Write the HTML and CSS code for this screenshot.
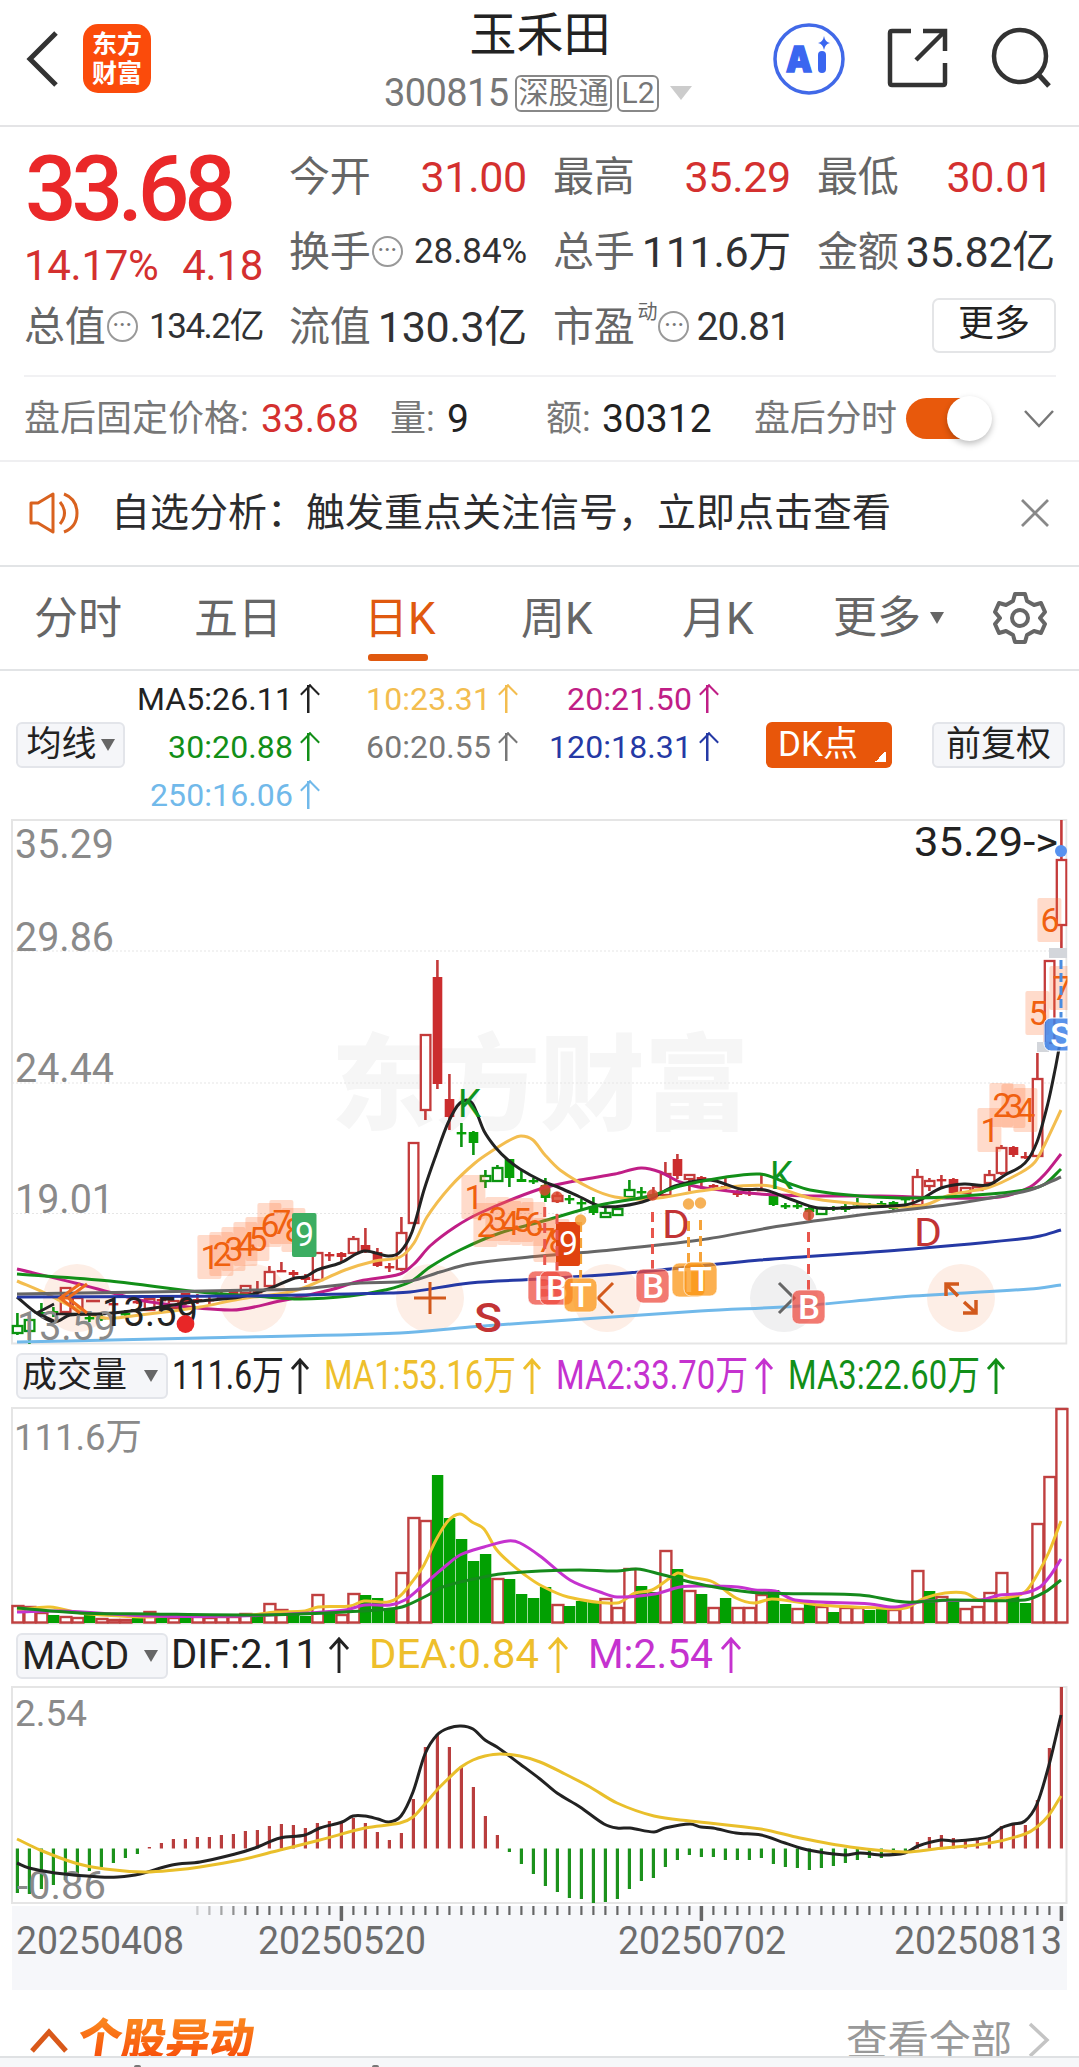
FILE: index.html
```html
<!DOCTYPE html>
<html lang="zh-CN">
<head>
<meta charset="utf-8">
<title>玉禾田 300815</title>
<link rel="stylesheet" href="styles.css">
</head>
<body>
<header class="topbar">
  <div class="topbar-left">
    <svg class="back" width="34" height="60" viewBox="0 0 34 60"><path d="M31 4 5 30 31 56" fill="none" stroke="#333" stroke-width="5"/></svg>
    <div class="logo"><span>东方</span><span>财富</span></div>
  </div>
  <div class="title">
    <h1>玉禾田</h1>
    <div class="code"><span class="num">300815</span><span class="tag">深股通</span><span class="tag tag-l2">L2</span><i class="tri tri-light"></i></div>
  </div>
  <div class="topbar-right">
    <svg width="74" height="74" viewBox="0 0 74 74"><circle cx="37" cy="37" r="34" fill="none" stroke="#4169e8" stroke-width="3.5"/><text x="14" y="50" class="ai" textLength="26" lengthAdjust="spacingAndGlyphs">A</text><path d="M50 33v14" stroke="#3a66f0" stroke-width="8" stroke-linecap="round"/><path d="M52 14q1 6 6 7q-5 1-6 7q-1-6-6-7q5-1 6-7z" fill="#3a66f0"/></svg>
    <svg width="62" height="62" viewBox="0 0 62 62"><path d="M24 4H5q-2 0-2 2V56q0 2 2 2H56q2 0 2-2V36M36 4H58V24M57 5 29 33" fill="none" stroke="#333" stroke-width="4.5"/></svg>
    <svg width="62" height="62" viewBox="0 0 62 62"><circle cx="30" cy="29" r="26" fill="none" stroke="#333" stroke-width="4.5"/><path d="M48 47 59 59" stroke="#333" stroke-width="5"/></svg>
  </div>
</header>

<section class="quote">
  <div class="last">
    <div class="price">33.68</div>
    <div class="change"><span>14.17%</span><span>4.18</span></div>
  </div>
  <div class="cell"><label>今开</label><b class="up">31.00</b></div>
  <div class="cell"><label>最高</label><b class="up">35.29</b></div>
  <div class="cell"><label>最低</label><b class="up end">30.01</b></div>
  <div class="cell"><label>换手</label><i class="dots">···</i><b class="small">28.84%</b></div>
  <div class="cell"><label>总手</label><b>111.6万</b></div>
  <div class="cell"><label>金额</label><b>35.82亿</b></div>
  <div class="cell"><label>总值</label><i class="dots">···</i><b class="small cap">134.2亿</b></div>
  <div class="cell"><label>流值</label><b>130.3亿</b></div>
  <div class="cell"><label>市盈<sup>动</sup></label><i class="dots dots-pe">···</i><b class="pe">20.81</b></div>
  <div class="cell cell-more"><button class="more">更多</button></div>
</section>

<section class="after">
  <span class="a1">盘后固定价格:</span><b class="up a2">33.68</b>
  <span class="a3">量:</span><b class="a4">9</b>
  <span class="a5">额:</span><b class="a6">30312</b>
  <span class="a7">盘后分时</span><i class="toggle"></i>
  <svg width="32" height="22" viewBox="0 0 32 22"><path d="M2 3 16 18 30 3" fill="none" stroke="#777" stroke-width="2.5"/></svg>
</section>

<section class="notice">
  <svg width="52" height="44" viewBox="0 0 52 44"><g fill="none" stroke="#d9621f" stroke-width="3"><path d="M2 12H9L24 3V41L9 32H2Z" stroke-linejoin="round"/><path d="M31 11Q40 22 31 33M35 3Q48 8 48 22T35 41"/></g></svg>
  <p>自选分析：触发重点关注信号，立即点击查看</p>
  <svg width="30" height="30" viewBox="0 0 30 30"><path d="M2 2 28 28M28 2 2 28" stroke="#888" stroke-width="2.8"/></svg>
</section>

<nav class="tabs">
  <span>分时</span><span>五日</span><span class="active">日K</span><span>周K</span><span>月K</span>
  <span class="tab-more">更多<i class="tri"></i></span>
  <svg width="54" height="54" viewBox="0 0 54 54"><g fill="none" stroke="#666" stroke-width="4" stroke-linejoin="round"><path d="M22 3H32L34 10L41 14L48 12L52 21L47 27L52 33L48 42L41 40L34 44L32 51H22L20 44L13 40L6 42L2 33L7 27L2 21L6 12L13 14L20 10Z"/><circle cx="27" cy="27" r="8"/></g></svg>
</nav>

<section class="ma">
  <button class="chip">均线<i class="tri"></i></button>
  <div class="ma-grid">
    <span class="c-black">MA5:26.11<i class="arrow"></i></span><span class="c-gold">10:23.31<i class="arrow"></i></span><span class="c-mag">20:21.50<i class="arrow"></i></span>
    <span class="c-green">30:20.88<i class="arrow"></i></span><span class="c-gray">60:20.55<i class="arrow"></i></span><span class="c-blue">120:18.31<i class="arrow"></i></span>
    <span class="c-sky">250:16.06<i class="arrow"></i></span>
  </div>
  <button class="chip chip-dk">DK点</button>
  <button class="chip chip-right">前复权</button>
</section>

<svg id="kline" class="chart" width="1079" height="526" viewBox="0 819 1079 526"></svg>

<section class="legend">
  <button class="chip">成交量<i class="tri"></i></button>
  <svg width="900" height="50" viewBox="172 1351 900 50" class="legend-values">
    <g class="c-black"><text x="172" y="1389" textLength="112" lengthAdjust="spacingAndGlyphs">111.6万</text><path d="M300 1394V1361M292 1369 300 1360 308 1369"/></g>
    <g class="c-yel"><text x="324" y="1389" textLength="192" lengthAdjust="spacingAndGlyphs">MA1:53.16万</text><path d="M532 1394V1361M524 1369 532 1360 540 1369"/></g>
    <g class="c-pur"><text x="556" y="1389" textLength="192" lengthAdjust="spacingAndGlyphs">MA2:33.70万</text><path d="M764 1394V1361M756 1369 764 1360 772 1369"/></g>
    <g class="c-green"><text x="788" y="1389" textLength="192" lengthAdjust="spacingAndGlyphs">MA3:22.60万</text><path d="M996 1394V1361M988 1369 996 1360 1004 1369"/></g>
  </svg>
</section>

<svg id="volume" class="chart" width="1079" height="218" viewBox="0 1407 1079 218"></svg>

<section class="legend legend-macd">
  <button class="chip">MACD<i class="tri"></i></button>
  <svg width="900" height="50" viewBox="172 1631 900 50" class="legend-values">
    <g class="c-black"><text x="171" y="1668" textLength="147" lengthAdjust="spacingAndGlyphs">DIF:2.11</text><path d="M339 1673V1640M330 1649 339 1639 348 1649"/></g>
    <g class="c-yel"><text x="369" y="1668" textLength="170" lengthAdjust="spacingAndGlyphs">DEA:0.84</text><path d="M558 1673V1640M549 1649 558 1639 567 1649"/></g>
    <g class="c-pur"><text x="588" y="1668" textLength="125" lengthAdjust="spacingAndGlyphs">M:2.54</text><path d="M731 1673V1640M722 1649 731 1639 740 1649"/></g>
  </svg>
</section>

<svg id="macd" class="chart" width="1079" height="218" viewBox="0 1686 1079 218"></svg>
<svg id="axis" class="chart axis" width="1079" height="86" viewBox="0 1904 1079 86"></svg>

<section class="moves">
  <svg width="40" height="26" viewBox="0 0 40 26"><path d="M3 23 20 4 37 23" fill="none" stroke="#d9591a" stroke-width="5"/></svg>
  <h2>个股异动</h2>
  <span>查看全部</span>
  <svg width="24" height="38" viewBox="0 0 24 38"><path d="M3 3 20 19 3 35" fill="none" stroke="#c4c4c4" stroke-width="3.5"/></svg>
</section>
<footer class="bottombar"><i></i><i></i></footer>
<script src="chart.js"></script>
</body>
</html>
```
FILE: styles.css
```css
* { box-sizing: border-box; }
html, body { margin: 0; }
body {
  width: 1079px; height: 2067px; overflow: hidden; background: #fff; color: #303133;
  font-family: Roboto, "Noto Sans CJK SC", sans-serif;
}
i { font-style: normal; }
b { font-weight: 400; }
button { font-family: inherit; color: #222; margin: 0; padding: 0; }
svg { display: block; flex: none; }
.tri { display: inline-block; border: 7px solid transparent; border-top: 12px solid #666; border-bottom: 0; }
.up { color: #d4302f; }

.topbar { height: 127px; border-bottom: 2px solid #e4e4e6; display: grid; grid-template-columns: 384px 312px 1fr; }
.topbar-left { display: flex; align-items: flex-start; padding: 24px 0 0 25px; }
.back { margin: 5px 24px 0 0; }
.logo { width: 68px; height: 69px; border-radius: 15px; background: #fb4b0b; color: #fff; display: flex; flex-direction: column; align-items: center; justify-content: center; font-weight: 700; font-size: 25px; line-height: 29px; }
.title { text-align: center; }
h1 { margin: 8px 0 0; font-weight: 400; font-size: 47px; line-height: 54px; color: #222; }
.code { display: flex; align-items: center; height: 38px; margin-top: 12px; color: #777; font-size: 38px; }
.code .num { width: 131px; text-align: left; letter-spacing: -.6px; }
.tag { border: 2px solid #888; border-radius: 6px; height: 37px; line-height: 32px; width: 97px; font-size: 30px; text-align: center; color: #777; }
.tag-l2 { width: 42px; margin-left: 5px; }
.tri-light { border-width: 14px 11px 0; border-top-color: #ccc; margin-left: 11px; }
.topbar-right { display: flex; padding: 22px 0 0 76px; }
.topbar-right svg + svg { margin: 5px 0 0 41px; }
.topbar-right svg + svg + svg { margin-left: 41px; }
.ai { font-family: Inter, sans-serif; font-weight: 900; font-size: 36px; fill: #3a66f0; stroke: #3a66f0; stroke-width: 1.5; }

.quote { height: 250px; margin: 0 23px 0 24px; padding-top: 12px; border-bottom: 2px solid #f1f1f3; display: grid; grid-template-columns: 239px 238px 238px 238px; grid-template-rows: 75px 75px 75px; column-gap: 26px; color: #303133; }
.last { grid-row: span 2; color: #ea2829; }
.price { font-size: 91px; font-weight: 500; line-height: 101px; letter-spacing: -5.3px; padding-left: 1px; }
.change { display: flex; justify-content: space-between; font-size: 42px; line-height: 52px; letter-spacing: -.3px; color: #d4302f; }
.cell { display: flex; align-items: center; justify-content: flex-end; white-space: nowrap; }
.cell label { font-size: 41px; color: #666; margin-right: auto; line-height: 60px; letter-spacing: -.2px; }
.cell b { font-size: 43px; line-height: 60px; letter-spacing: -.3px; }
.cell .small { font-size: 35px; letter-spacing: -.1px; flex: 1; text-align: right; }
.cell .cap { letter-spacing: -1.5px; }
.cell .end { margin-right: 2px; }
.dots { width: 31px; height: 31px; border: 2.5px solid #999; border-radius: 50%; margin-left: 1px; font-size: 27px; line-height: 24px; text-align: center; color: #777; flex: none; letter-spacing: -.5px; }
.cell label:has(+ .dots) { margin-right: 0; }
.cell .pe { font-size: 39px; flex: 1; text-align: right; margin-right: 1px; letter-spacing: -.9px; }
sup { font-size: 20px; line-height: 0; vertical-align: 22px; margin-left: 3px; }
.dots-pe { margin-left: 1px; }
.more { width: 124px; height: 55px; border: 2px solid #e4e5e7; border-radius: 7px; background: #fff; font-size: 36px; line-height: 46px; padding-bottom: 4px; }
.cell-more { margin-right: -1px; align-items: flex-start; padding-top: 9px; }

.after { height: 85px; border-bottom: 2px solid #efeff1; display: flex; align-items: center; padding-left: 24px; font-size: 36px; line-height: 50px; color: #777; white-space: nowrap; }
.after b { font-size: 39px; color: #222; }
.after b.up { color: #d4302f; }
.a1 { width: 237px; } .a2 { width: 129px; } .a3 { width: 57px; } .a4 { width: 99px; } .a5 { width: 56px; } .a6 { width: 152px; } .a7 { width: 152px; letter-spacing: -.3px; }
.toggle { width: 82px; height: 41px; border-radius: 21px; background: #e8590c; position: relative; margin-right: 35px; }
.toggle::after { content: ""; position: absolute; right: -4px; top: -2px; width: 45px; height: 45px; border-radius: 50%; background: #fff; box-shadow: 0 3px 6px rgba(0,0,0,.25); }

.notice { height: 105px; border-bottom: 2px solid #e2e4e6; display: flex; align-items: center; padding: 0 29px 2px 29px; }
.notice p { margin: 0 auto 0 30px; font-size: 39px; line-height: 60px; color: #2c2c2e; }

.tabs { height: 104px; border-bottom: 2px solid #e2e4e6; display: flex; align-items: center; padding-left: 34px; font-size: 44px; color: #666; white-space: nowrap; }
.tabs > span { height: 100px; line-height: 103px; }
.tabs > span:nth-child(1) { width: 160px; }
.tabs > span:nth-child(2) { width: 170px; }
.tabs > .active { width: 71px; margin-right: 86px; color: #e0590f; position: relative; }
.active::after { content: ""; position: absolute; left: 4px; bottom: 7px; width: 60px; height: 7px; border-radius: 3px; background: #e0590f; }
.tabs > span:nth-child(4) { width: 161px; }
.tabs > span:nth-child(5) { width: 151px; }
.tab-more { width: 160px; display: flex; align-items: center; }
.tab-more .tri { margin-left: 9px; }

.ma { height: 148px; display: flex; align-items: center; padding: 0 14px 0 16px; }
.chip { height: 46px; border: 2px solid #e3e5ea; border-radius: 6px; background: #f5f6f9; font-size: 35px; line-height: 38px; display: flex; align-items: center; justify-content: center; white-space: nowrap; flex: none; }
.ma .chip { width: 109px; }
.ma .chip .tri { margin-left: 4px; }
.ma-grid { display: grid; grid-template-columns: 193px 198px 201px; grid-template-rows: repeat(3, 48px); width: 641px; font-size: 32px; line-height: 48px; margin-top: 3px; letter-spacing: .1px; }
.ma-grid span { display: flex; align-items: center; justify-content: flex-end; }
.arrow { width: 17px; height: 28px; margin-left: 7px; margin-right: 1px; background: linear-gradient(currentColor, currentColor) 50% 0 / 2.5px 100% no-repeat; position: relative; }
.arrow::after { content: ""; position: absolute; left: 2.5px; top: 2px; width: 12px; height: 12px; border: solid currentColor; border-width: 2.5px 0 0 2.5px; transform: rotate(45deg); }
.ma .chip-dk { width: 126px; background: linear-gradient(135deg, transparent 50%, #fff 50%) 108px 30px / 12px 10px no-repeat #e8560a; border: 0; color: #fff; justify-content: flex-start; padding-left: 12px; font-size: 35px; line-height: 42px; }
.ma .chip-right { width: 133px; margin-left: auto; }

.c-black { color: #222; } .c-gold { color: #f3bd4f; } .c-mag { color: #c01e86; } .c-green { color: #128f18; } .c-gray { color: #777; } .c-blue { color: #2539a5; } .c-sky { color: #71b9ea; } .c-yel { color: #eebf2c; } .c-pur { color: #c532cf; }

.legend { height: 62px; display: flex; align-items: flex-start; padding: 8px 0 0 16px; }
.legend-macd { padding-top: 8px; height: 61px; }
.legend .chip { width: 152px; margin-right: 4px; justify-content: space-between; padding: 0 8px 0 4px; }
.legend-macd .chip { font-size: 38px; letter-spacing: -.2px; }
.legend-values { font-size: 40px; margin-top: -2px; }
.legend-values text { fill: currentColor; }
.legend-values path { stroke: currentColor; stroke-width: 2.9; fill: none; }

.chart { overflow: hidden; }
.chart text { font-family: Roboto, "Noto Sans CJK SC", sans-serif; }
.moves { height: 66px; overflow: hidden; display: flex; align-items: flex-start; padding: 0 28px 0 29px; }
.moves > svg:first-child { margin-top: 38px; }
.moves > svg:last-child { margin: 31px 0 0 15px; }
h2 { margin: 22px 0 0 9px; font-size: 44px; line-height: 56px; font-weight: 900; width: 200px; transform: skewX(-8deg); background: linear-gradient(#fa831d 20%, #f8540c 75%); -webkit-background-clip: text; color: transparent; }
.moves span { margin: 24px 0 0 auto; font-size: 41.5px; line-height: 56px; color: #999; }
.bottombar { height: 11px; border-top: 2px solid #dfe1e3; background: #f6f7f9; display: flex; align-items: flex-end; padding-left: 134px; }
.bottombar i { width: 7px; height: 2px; border-radius: 2px 2px 0 0; background: #777; margin-right: 231px; }
```
FILE: chart.js
```js
const RED = '#c43a3a', FILL = '#cb2d2e', GREEN = '#0b9410';
const X = i => 17.4 + 12 * i;
const el = id => document.getElementById(id);
const rect = (x, y, w, h, a) => `<rect x="${x}" y="${y}" width="${w}" height="${h}" ${a}/>`;
const line = (x1, y1, x2, y2, c, w, a = '') => `<path d="M${x1} ${y1}L${x2} ${y2}" stroke="${c}" stroke-width="${w}" fill="none" ${a}/>`;
const text = (s, x, y, size, w, fill, a = '') => `<text x="${x}" y="${y}" font-size="${size}" ${w ? `textLength="${w}" lengthAdjust="spacingAndGlyphs"` : ''} fill="${fill}" ${a}>${s}</text>`;

// Smooth curve through "x,y" pairs
function curve(pts, c, w = 3) {
  const p = pts.split(' ').map(s => s.split(',').map(Number));
  let d = `M${p[0]}`;
  for (let i = 0; i < p.length - 1; i++) {
    const dx = (p[i + 1][0] - p[i][0]) / 3;
    const m = k => k <= 0 || k >= p.length - 1 ? null : (p[k + 1][1] - p[k - 1][1]) / (p[k + 1][0] - p[k - 1][0]);
    const s = (p[i + 1][1] - p[i][1]) / (p[i + 1][0] - p[i][0]);
    const a = m(i) ?? s, b = m(i + 1) ?? s;
    d += `C${p[i][0] + dx} ${p[i][1] + a * dx} ${p[i + 1][0] - dx} ${p[i + 1][1] - b * dx} ${p[i + 1]}`;
  }
  return `<path d="${d}" fill="none" stroke="${c}" stroke-width="${w}" stroke-linejoin="round"/>`;
}
const frame = (y, h) => rect(12, y, 1054.5, h, 'fill="none" stroke="#e5e5e5" stroke-width="2"');

// Candles: kind (r/g hollow, R/G filled), high, top, bottom, low
const candles = `g 1313 1325 1333 1335|g 1315 1319 1331 1344|G 1303 1312 1314 1315|G 1307 1311 1313 1317|r 1287 1287 1312 1312|r 1297 1297 1308 1308|G 1312 1317 1319 1322|G 1313 1317 1319 1321|R 1303 1303 1305 1305|G 1310 1313 1315 1318|R 1300 1301 1303 1304|r 1298 1298 1310 1310|R 1296 1299 1301 1306|r 1300 1300 1308 1308|R 1293 1293 1303 1305|R 1294 1299 1301 1304|R 1296 1299 1301 1304|R 1292 1296 1298 1300|R 1290 1291 1297 1297|r 1285 1285 1293 1293|R 1281 1291 1293 1296|r 1266 1271 1286 1286|R 1262 1270 1272 1272|R 1270 1272 1275 1277|R 1274 1277 1280 1283|r 1252 1252 1280 1280|R 1252 1254 1256 1261|R 1252 1253 1257 1263|r 1236 1238 1253 1253|R 1228 1245 1251 1253|R 1248 1252 1266 1267|R 1263 1266 1268 1272|r 1217 1232 1269 1271|r 1142 1142 1223 1223|r 1034 1034 1110 1120|R 960 977 1084 1089|R 1074 1099 1117 1130|G 1123 1132 1134 1147|G 1131 1132 1143 1155|g 1170 1175 1181 1188|g 1165 1167 1181 1181|G 1159 1159 1178 1187|G 1169 1179 1182 1182|G 1178 1180 1182 1184|G 1178 1185 1198 1202|r 1192 1195 1201 1203|G 1195 1198 1200 1204|G 1199 1202 1204 1209|G 1197 1206 1213 1215|g 1206 1212 1217 1217|g 1208 1208 1215 1215|g 1180 1189 1197 1197|G 1187 1191 1193 1197|R 1187 1194 1196 1200|r 1162 1173 1195 1197|R 1154 1159 1176 1179|r 1174 1174 1179 1191|R 1176 1177 1182 1189|R 1184 1185 1187 1189|R 1177 1186 1188 1191|R 1190 1191 1195 1197|R 1190 1192 1194 1196|R 1175 1189 1191 1191|G 1193 1195 1205 1206|G 1203 1205 1207 1209|G 1203 1205 1207 1209|G 1206 1208 1212 1220|g 1207 1207 1214 1215|G 1206 1207 1209 1211|G 1204 1206 1210 1212|G 1198 1203 1205 1208|G 1203 1204 1206 1209|G 1201 1203 1205 1208|G 1201 1202 1209 1210|G 1196 1198 1200 1204|r 1169 1176 1205 1205|r 1178 1180 1186 1191|R 1175 1179 1181 1187|R 1178 1179 1193 1193|r 1187 1187 1193 1193|r 1186 1186 1190 1190|r 1170 1174 1183 1183|r 1145 1147 1173 1175|R 1146 1147 1155 1157|R 1152 1156 1158 1159|r 1053 1078 1156 1156|r 960 960 1043 1043|r 820 859 925 948`.split('|');

function candle(s, i) {
  const [k, ...v] = s.split(' '), [h, t, b, l] = v.map(Number), x = X(i);
  const c = k.toLowerCase() === 'r' ? RED : GREEN;
  const body = k === 'r' || k === 'g'
    ? rect(x - 4.6, t + 1, 9.6, Math.max(b - t - 1, 3), `fill="#fff" fill-opacity=".9" stroke="${c}" stroke-width="2.3"`)
    : rect(x - 4.7, t, 9.6, Math.max(b - t, 2.4), `fill="${k === 'R' ? FILL : '#07a006'}"`);
  return line(x, h, x, t, c, 2.6) + line(x, b, x, l, c, 2.6) + body;
}

let k = text('东方财富', 331, 1122, 104, 418, '#f6f6f6', 'font-weight="900"') + frame(820, 523.5);
for (const y of [951, 1083, 1213.5]) k += line(12, y, 1066, y, '#e6e6e6', 1.2, 'stroke-dasharray="2 2"');
for (const x of [77, 253, 430, 607, 961]) k += `<circle cx="${x}" cy="1298" r="34" fill="#fdeee6"/>`;
k += '<circle cx="784" cy="1298" r="34" fill="#f0f0f1"/>';
k += candles.map(candle).join('');

// Moving averages
k += curve('17,1342 200,1338 400,1333 470,1327 540,1322 700,1311 800,1306 900,1297 1030,1289 1061,1285', '#71b9ea');
k += curve('17,1269 75,1283 120,1295 150,1302 232,1310 280,1301 330,1290 360,1281 400,1274 414,1264 430,1246 455,1227 480,1213 540,1189 580,1180 615,1174 641,1168 660,1172 680,1182 705,1188 760,1194 820,1196 880,1196 950,1198 1000,1197 1030,1187 1045,1174 1061,1154', '#c01e86');
k += curve('17,1281 45,1293 75,1308 105,1318 140,1315 200,1307 240,1299 290,1292 313,1284 345,1270 375,1261 400,1257 414,1243 427,1217 450,1187 475,1163 495,1149 510,1140 521,1136 533,1140 545,1155 560,1170 590,1188 615,1197 650,1199 700,1191 740,1186 770,1186 810,1198 850,1203 900,1207 925,1205 950,1195 990,1187 1020,1173 1035,1162 1045,1144 1061,1110', '#f3bd4f');
k += curve('17,1297 35,1312 54,1322 70,1315 100,1314 140,1310 200,1301 240,1297 265,1290 295,1278 305,1277 317,1270 340,1263 364,1251 388,1256 400,1252 412,1232 424,1190 436,1155 448,1123 460,1103 472,1103 484,1131 496,1148 508,1160 520,1169 540,1180 560,1188 580,1197 600,1206 622,1206 648,1200 675,1186 710,1180 740,1189 765,1190 790,1199 818,1208 860,1207 905,1205 920,1200 941,1188 964,1184 988,1185 1005,1175 1025,1163 1037,1142 1048,1103 1055,1070 1060,1043', '#222');
k += curve('17,1274 110,1281 200,1292 255,1296 300,1299 350,1296 385,1290 410,1282 430,1267 460,1250 500,1233 540,1222 600,1205 650,1196 680,1186 720,1178 760,1174 785,1182 810,1190 860,1196 920,1198 990,1194 1030,1189 1045,1184 1061,1169', '#128f18');
k += curve('17,1297 250,1296 390,1293 410,1292 470,1283 540,1279 640,1272 760,1260 900,1250 1020,1239 1040,1236 1061,1230', '#2539a5');
k += curve('17,1294 150,1292 260,1290 300,1289 360,1283 410,1281 440,1272 470,1264 540,1256 600,1251 700,1240 780,1226 860,1215 960,1203 1030,1190 1061,1177', '#666');

for (const [s, x, y] of [['35.29', 15, 858], ['29.86', 15, 950.5], ['24.44', 15, 1081.5], ['19.01', 15, 1213], ['13.59', 17, 1340]]) k += text(s, x, y, 40, 99, '#8a8a8a');
k += text('35.29-&gt;', 914, 856, 40.5, 144, '#222');
k += `<path d="M54 1304 37 1313 54 1321M56 1314H102" fill="none" stroke="#222" stroke-width="2.7"/>` + text('13.59', 102, 1326, 41, 96, '#222');
k += '<circle cx="185.5" cy="1324" r="8.9" fill="#e82627"/>' + line(86, 1301, 100, 1301, RED, 2.6);

// Sequence numbers: digit, candle index, top
const seq = '1 16 1235|2 17 1232|3 18 1227|4 19 1222|5 20 1217|6 21 1203|7 22 1200|8 23 1208|1 38 1175|2 39 1203|3 40 1197|4 41 1201|5 42 1198|6 43 1202|7 44 1218|8 45 1219|1 81 1108|2 82 1083|3 83 1084|4 84 1088|5 85 991|6 86 898|7 87 966'.split('|').map(s => s.split(' ').map(Number));
for (const [, i, y] of seq) k += rect(X(i) - 12, y, 24, 44, 'rx="2" fill="#ff7030" fill-opacity=".25"');
for (const [n, i, y] of seq) k += text(n, X(i) - 9, y + 34, 34, 19, '#f0600f');
k += rect(292, 1213, 24.5, 44, 'rx="2" fill="#3cad62"') + text('9', 295, 1246, 34, 19, '#fff');
k += line(580.6, 1222, 580.6, 1278, '#f5a33a', 3, 'stroke-dasharray="10 6"');
k += rect(556, 1222, 24, 44, 'rx="2" fill="#e0420f"') + text('9', 559, 1255, 34, 19, '#fff');

for (const [s, x, y, c] of [['K', 458, 1117, '#0f9420'], ['K', 770, 1189, '#0f9420'], ['D', 662, 1238, '#c23335'], ['D', 914, 1246, '#c23335'], ['S', 474, 1332, '#c23335']]) k += text(s, x, y, s === 'S' ? 40 : 39, s === 'K' ? 23 : 28, c, s === 'S' ? 'font-weight="500"' : '');

// Floating tool glyphs
const tool = (d, c = '#d2591c', w = 3) => `<path d="${d}" fill="none" stroke="${c}" stroke-width="${w}"/>`;
k += tool('M80 1284 60 1298 80 1313M87 1284 68 1298 87 1313M60 1298H70', '#ee6b1c') + tool('M414 1298H446M430 1282V1314') + tool('M613 1283 598 1298 613 1313') + tool('M779 1283 794 1298 779 1313', '#666');
k += tool('M946 1296V1284H959M946 1284 958 1296M964 1302 976 1313M976 1300V1313H963', '#d2591c', 3.5);

// Trade markers: letter, badge x, badge y, stem x, dot y
for (const [s, bx, by, x, y] of [['B', 528, 1271, 544.7, 1190], ['B', 540, 1271, 557, 1197], ['B', 636, 1269, 652.5, 1195], ['B', 792, 1290, 808.5, 1215], ['T', 564, 1278, 580.6, 1220], ['T', 672, 1263, 688.5, 1204], ['T', 684, 1262, 700.5, 1203]]) {
  const b = s === 'B', c = b ? '#e8564d' : '#f5a33a';
  if (bx !== 564) k += line(x, y + 17, x, by, c, 3, 'stroke-dasharray="10 6"');
  k += `<circle cx="${x}" cy="${y}" r="5.7" fill="${b ? '#d9482f' : c}" fill-opacity=".85"/>`;
  k += rect(bx, by, 33, 34, `rx="7" fill="${b ? '#ee4b40' : '#fb9512'}" fill-opacity=".74" stroke="#fff" stroke-opacity=".7"`);
  k += text(s, bx + 6, by + 28.5, 33, 22, '#fff', 'font-weight="500"');
}
k += rect(1049, 948, 18, 10, 'fill="#d3d6db"') + rect(1037, 1042, 12, 10, 'fill="#d3d6db"');
k += line(1061, 960, 1061, 1018, '#4b8de0', 3, 'stroke-dasharray="9 4"') + '<circle cx="1061" cy="851" r="6" fill="#5792ef"/>';
k += rect(1044, 1018, 34, 33, 'rx="7" fill="#3f82e8" fill-opacity=".86" stroke="#fff"') + text('S', 1050, 1047, 34, 22, '#fff', 'font-weight="500"');
k += rect(1067.5, 819, 12, 526, 'fill="#fff"');
el('kline').innerHTML = k;

// Volume: colour + top edge
const vol = 'r1605 r1606 r1612 g1615 r1616 r1617 g1614 r1618 r1619 r1619 g1616 r1611 g1615 r1617 g1617 r1616 r1617 r1616 r1616 r1613 g1615 r1603 r1609 g1613 g1616 r1594 g1612 r1614 r1593 g1595 g1598 g1608 r1572 r1517 r1520 g1475 g1518 g1539 g1561 g1554 r1578 g1579 g1594 g1598 g1587 r1604 g1606 g1601 g1601 r1598 r1607 r1568 g1586 g1592 r1550 g1569 r1590 g1594 r1607 g1598 r1607 r1607 r1594 g1590 g1604 r1608 g1602 r1606 g1612 r1607 r1607 g1610 g1609 r1609 r1606 r1570 g1591 r1596 g1602 r1608 r1606 r1592 r1572 g1596 g1603 r1523 r1476 r1408'.split(' ');
let v = frame(1408, 215.5) + text('111.6万', 14, 1450, 37, 128, '#8a8a8a');
vol.forEach((s, i) => {
  const y = +s.slice(1);
  v += s[0] === 'r' ? rect(X(i) - 5, y + 1, 11, 1621.5 - y, 'fill="#fff" stroke="#c04040" stroke-width="2.4"') : rect(X(i) - 5.5, y, 11.4, 1623 - y, 'fill="#02a002"');
});
v += curve('17,1610 50,1607 80,1613 120,1616 145,1617 170,1616 250,1615 275,1612 305,1611 318,1607 350,1606 364,1601 388,1602 400,1596 412,1582 424,1565 436,1540 448,1521 460,1514 472,1522 484,1529 496,1549 510,1563 525,1575 540,1585 568,1597 617,1603 635,1593 652,1590 670,1578 678,1573 690,1577 713,1582 736,1598 754,1603 772,1599 820,1605 880,1608 905,1608 925,1598 945,1593 965,1593 980,1600 1010,1597 1025,1592 1037,1575 1049,1552 1061,1521', '#efc22f');
v += curve('17,1612 60,1611 150,1616 240,1616 290,1614 345,1610 365,1605 390,1605 405,1600 420,1588 435,1575 448,1564 460,1555 484,1547 508,1541 520,1543 540,1556 570,1580 600,1592 617,1597 655,1594 680,1587 705,1586 738,1587 755,1590 775,1591 795,1600 870,1604 895,1607 925,1601 980,1600 1000,1595 1025,1593 1040,1587 1050,1576 1061,1559', '#c532cf');
v += curve('17,1608 80,1613 150,1614 250,1615 300,1614 345,1612 390,1609 405,1606 430,1594 440,1588 460,1582 484,1577 500,1574 540,1571 580,1570 617,1571 637,1569 660,1574 690,1582 720,1588 760,1593 860,1595 905,1602 950,1600 1025,1600 1045,1592 1061,1580', '#158a1c');
el('volume').innerHTML = v;

// MACD histogram: end of each bar, measured from the zero line
const hist = [1893,1894,1889,1885,1880,1875,1871,1867,1863,1858,1854,1847,1843,1839,1839,1837,1837,1835,1834,1831,1830,1826,1824,1825,1828,1823,1821,1822,1818,1823,1832,1840,1833,1799,1747,1734,1747,1766,1787,1816,1835,1852,1864,1874,1886,1892,1898,1899,1903,1902,1899,1889,1881,1878,1867,1860,1855,1857,1857,1860,1860,1860,1858,1864,1867,1868,1870,1868,1866,1863,1860,1858,1858,1855,1853,1842,1837,1835,1838,1839,1839,1836,1826,1824,1825,1800,1748,1687];
let m = frame(1687, 216) + text('2.54', 15, 1726, 37, 72, '#8a8a8a');
m += hist.map((y, i) => line(X(i), 1848.5, X(i), y, y < 1848 ? '#b93e3e' : '#1c921c', 3.2)).join('');
m += text('-0.86', 17, 1899, 38, 89, '#8a8a8a');
m += curve('17,1863 29,1868 55,1873 100,1877 118,1877 140,1874 172,1865 200,1862 235,1854 255,1848 280,1838 305,1835 320,1828 342,1822 353,1816 365,1816 378,1819 389,1822 401,1816 413,1792 425,1754 437,1735 449,1728 461,1726 473,1729 485,1740 497,1747 520,1764 540,1779 557,1793 580,1807 604,1824 617,1828 630,1828 654,1832 665,1828 690,1824 701,1827 713,1828 736,1833 761,1835 785,1843 808,1850 845,1855 860,1853 882,1855 905,1853 918,1846 941,1840 955,1841 977,1839 990,1836 1001,1828 1013,1824 1025,1821 1037,1804 1049,1765 1061,1715', '#222');
m += curve('17,1839 40,1850 75,1863 105,1869 145,1872 175,1870 200,1867 240,1860 280,1850 320,1840 365,1828 400,1823 413,1817 425,1804 437,1790 449,1778 461,1767 473,1760 485,1756 500,1754 520,1756 540,1762 565,1774 590,1787 617,1803 654,1816 690,1821 761,1829 800,1838 850,1847 905,1852 935,1849 990,1843 1025,1834 1037,1827 1049,1815 1061,1796', '#e9bf2b');
el('macd').innerHTML = m;

let a = rect(12, 1906, 1055, 84, 'fill="#f6f7fa"');
for (let i = 15; i < 88; i++) {
  const big = i === 27 || i === 57 || i === 87;
  a += line(X(i), 1906, X(i), big ? 1921 : 1915, '#666', big ? 3.5 : 2.2, `opacity="${Math.min(1, (i - 13) / 7)}"`);
}
for (const [s, x] of [['20250408', 16], ['20250520', 258], ['20250702', 618], ['20250813', 894]]) a += text(s, x, 1954, 38, 168, '#6c6c6c');
el('axis').innerHTML = a;
```
